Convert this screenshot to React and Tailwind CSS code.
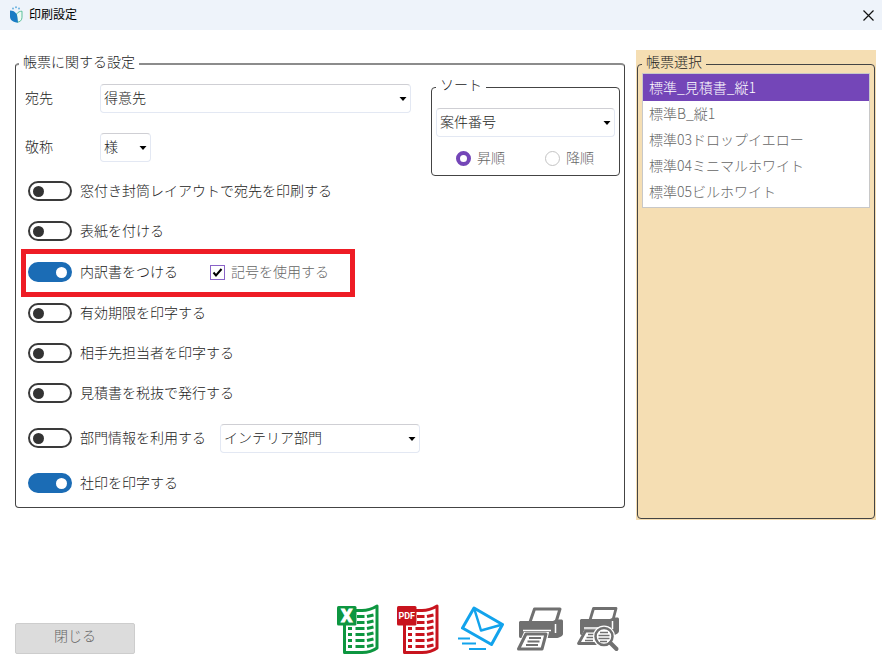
import React, { useState } from "react";

const FONT = "font-['Noto_Sans_CJK_JP',sans-serif]";

const reports = [
  "標準_見積書_縦1",
  "標準B_縦1",
  "標準03ドロップイエロー",
  "標準04ミニマルホワイト",
  "標準05ビルホワイト",
];

const Select = ({ id, label, options, className = "" }) => (
  <div className={`relative ${className}`}>
    <select
      id={id}
      aria-label={label}
      className="block h-[29px] w-full appearance-none rounded-sm border border-[#e3e8f3] border-t-[#cfcfd4] bg-white pb-[3px] pl-[3px] pr-5 text-[#222]"
    >
      {options.map((option) => (
        <option key={option}>{option}</option>
      ))}
    </select>
    <svg
      viewBox="0 0 8 4"
      className="pointer-events-none absolute right-1 top-[13px] h-1 w-2 fill-black"
    >
      <path d="M0.5 0h7L4 4z" />
    </svg>
  </div>
);

const Toggle = ({ label, on = false }) => {
  const [checked, setChecked] = useState(on);
  return (
    <label className="flex items-center gap-2">
      <input
        type="checkbox"
        role="switch"
        checked={checked}
        onChange={() => setChecked(!checked)}
        className={`flex h-5 w-11 shrink-0 appearance-none items-center rounded-full border-2 px-[3px] before:size-[11px] before:rounded-full ${
          checked
            ? "justify-end border-[#1b6cb5] bg-[#1b6cb5] before:bg-white"
            : "justify-start border-[#3a3a3a] bg-white before:bg-[#333]"
        }`}
      />
      <span className="pb-0.5">{label}</span>
    </label>
  );
};

const Legend = ({ children, className = "ml-[3px]" }) => (
  <legend className={`px-1 pb-[5px] leading-[13px] ${className}`}>
    {children}
  </legend>
);

const LogoIcon = () => (
  <svg viewBox="0 0 14 18" className="h-[18px] w-[14px]">
    <path
      d="M7.5 8c1.500-2 3.500-2.800 5.500-2.800v6c0 3-2 5-5 5z"
      fill="#eefaf4"
      stroke="#5cc09c"
    />
    <path
      d="M1 4.500c3 0 5 1 6.500 3.500 1 2 1 5 1.500 8.500-5 0-8-2.500-8-6z"
      fill="#1a7cc4"
    />
    <circle cx="4" cy="2.500" r="1" fill="#6db4e0" />
    <circle cx="7" cy="1.200" r="1" fill="#6db4e0" />
    <circle cx="10" cy="2.500" r="1" fill="#6db4e0" />
  </svg>
);

const SheetIcon = ({ color, text }) => (
  <svg viewBox="0 0 42 50" className="h-[50px] w-[42px]">
    <path
      d="M18 6.500h7c6 0 10-1.500 15-4.500v42c-4 3-9 4.500-15 4.500H7.500V20"
      fill="none"
      stroke={color}
      strokeWidth="3"
      strokeLinejoin="round"
    />
    <path
      d="M20 12.500h7.500M20 18.500h7.500M18.500 24.500h9M18.500 30.500h9M18.500 36.500h9M18.500 42.500h9M11 24.500h4M11 30.500h4M11 36.500h4M11 42.500h4M30 12.500l6.500-1.500M30 18.500l6.500-1.500M30 24.500l6.500-1.500M30 30.500l6.500-1.500M30 36.500l6.500-1.500M30 42.500l6.500-1.500"
      stroke={color}
      strokeWidth="3"
    />
    <rect y="2" width="19.500" height="19.500" rx="1.500" fill={color} />
    <text
      x="9.700"
      y={text === "X" ? 18 : 15}
      textAnchor="middle"
      fill="#fff"
      stroke="#fff"
      strokeWidth={text === "X" ? 1 : 0}
      fontFamily="Roboto, sans-serif"
      fontWeight="bold"
      fontSize={text === "X" ? 18 : 9}
    >
      {text}
    </text>
  </svg>
);

const MailIcon = () => (
  <svg
    viewBox="0 0 46 46"
    className="h-[46px] w-[46px]"
    fill="none"
    stroke="#12a3ec"
    strokeWidth="3"
    strokeLinejoin="round"
  >
    <path d="M16 2L44.500 18.500L33.500 38.500L4.500 22z" />
    <path d="M16 2L23 24.500L44.500 18.500" strokeWidth="2.500" />
    <path d="M0 32.500h12M4 37.500h14M11 43h17" strokeWidth="2.200" />
  </svg>
);

const PrinterIcon = () => (
  <svg viewBox="0 0 48 44" className="h-11 w-12">
    <path d="M14 15L18.500 2H44L40 15" fill="#fff" stroke="#707070" strokeWidth="3" strokeLinejoin="round" />
    <path d="M4 14h33l3-1.500h5c1.500 0 2 .5 2 2v12.500c0 2-4 4-7 4H5c-1.500 0-2-.5-2-2V15z" fill="#707070" />
    <path d="M7 23.500h28M39.500 17v9" stroke="#fff" strokeWidth="1.500" />
    <path d="M8 25H33L29 43.500H0z" fill="#fff" />
    <path d="M10 27H30L26 42H2.500z" fill="#fff" stroke="#707070" strokeWidth="3" strokeLinejoin="round" />
    <path d="M13 31h12M11.500 34.500h12M10 38h12" stroke="#707070" strokeWidth="1.800" />
  </svg>
);

const PreviewIcon = () => (
  <svg viewBox="0 0 46 46" className="h-[46px] w-[46px]">
    <path d="M14 14L17.500 2.500H40L37 14" fill="#fff" stroke="#707070" strokeWidth="2.800" strokeLinejoin="round" />
    <path d="M5 13h29l3-1.500h4c1.500 0 2 .5 2 2v11.500c0 2-3 4-6 4H6c-1.500 0-2-.5-2-2V14z" fill="#707070" />
    <path d="M8 22h26M36.500 15v8" stroke="#fff" strokeWidth="1.500" />
    <path d="M8.500 23.500H28L24 41H0z" fill="#fff" />
    <path d="M9.500 25H26L22 37.500H2.500z" fill="#fff" stroke="#707070" strokeWidth="2.800" strokeLinejoin="round" />
    <path d="M12 28.500h8M10.500 31.500h8M9 34.500h8" stroke="#707070" strokeWidth="1.500" />
    <circle cx="28" cy="30.500" r="11" fill="#fff" />
    <circle cx="28" cy="30.500" r="8.500" fill="#fff" stroke="#707070" strokeWidth="2.500" />
    <path d="M24 26.500h8M22.500 29.500h11M22.500 32.500h11M24 35.500h7" stroke="#707070" strokeWidth="1.500" />
    <path d="M34.500 37l6 6" stroke="#707070" strokeWidth="4" strokeLinecap="round" />
  </svg>
);

const App = () => {
  const [selected, setSelected] = useState(0);

  return (
    <div className={`flex min-h-screen flex-col bg-white text-[14px] font-light leading-5 text-[#222] ${FONT}`}>
      <header className="flex h-[30px] items-center bg-[#eef3fa] pl-[9px] pr-1.5 text-black">
        <LogoIcon />
        <h1 className="ml-1.5 flex-1 pb-0.5 text-[12px] font-normal">印刷設定</h1>
        <button type="button" aria-label="閉じる" className="p-0.5">
          <svg viewBox="0 0 11 11" className="size-[11px]" stroke="#111" strokeWidth="1.200">
            <path d="M0.500 0.500l10 10M10.500 0.500l-10 10" />
          </svg>
        </button>
      </header>

      <main className="flex items-start gap-[11px] pl-[15px] pr-1.5 pt-5">
        <fieldset className="mt-[5px] flex-1 rounded border border-t-2 border-[#444] border-t-[#8c8c8c] pb-1">
          <Legend>帳票に関する設定</Legend>
          <div className="flex items-start">
            <div className="flex-1 pt-[11px]">
              <div className="flex items-center pl-[9px]">
                <label htmlFor="dest" className="w-[75px] pb-[3px]">宛先</label>
                <Select id="dest" options={["得意先"]} className="mr-5 flex-1" />
              </div>
              <div className="mt-5 flex items-center pl-[9px]">
                <label htmlFor="honorific" className="w-[75px] pb-[3px]">敬称</label>
                <Select id="honorific" options={["様"]} className="w-[51px]" />
              </div>
              <div className="mt-[9px] pl-3">
                <div className="flex h-10 items-center">
                  <Toggle label="窓付き封筒レイアウトで宛先を印刷する" />
                </div>
                <div className="flex h-10 items-center">
                  <Toggle label="表紙を付ける" />
                </div>
                <div className="relative flex h-[42px] items-center gap-8">
                  <Toggle label="内訳書をつける" on />
                  <label className="flex items-center gap-1.5 text-[#666]">
                    <input
                      type="checkbox"
                      defaultChecked
                      className="peer size-[15px] appearance-none border border-[#8a63c8] bg-white"
                    />
                    <svg
                      viewBox="0 0 15 15"
                      className="pointer-events-none invisible absolute size-[15px] peer-checked:visible"
                      fill="none"
                      stroke="#000"
                      strokeWidth="2"
                    >
                      <path d="M3.500 7.500l2.500 3L11.500 4" />
                    </svg>
                    <span className="pb-0.5">記号を使用する</span>
                  </label>
                  <div className="pointer-events-none absolute -left-[7px] -top-0.5 h-12 w-[334px] border-[5px] border-[#ee1c25]" />
                </div>
                <div className="flex h-10 items-center">
                  <Toggle label="有効期限を印字する" />
                </div>
                <div className="flex h-10 items-center">
                  <Toggle label="相手先担当者を印字する" />
                </div>
                <div className="flex h-10 items-center">
                  <Toggle label="見積書を税抜で発行する" />
                </div>
                <div className="flex h-[50px] items-center gap-3.5">
                  <Toggle label="部門情報を利用する" />
                  <Select label="部門" options={["インテリア部門"]} className="w-[200px]" />
                </div>
                <div className="flex h-10 items-center">
                  <Toggle label="社印を印字する" on />
                </div>
              </div>
            </div>

            <fieldset className="mr-1 mt-[5px] w-[189px] rounded border border-[#444] px-1 pb-1.5">
              <Legend className="">ソート</Legend>
              <Select label="並び順の項目" options={["案件番号"]} className="mt-3" />
              <div className="mt-[10px] flex gap-10 pl-5 text-[#666]">
                <label className="flex items-center gap-1.5">
                  <input
                    type="radio"
                    name="order"
                    defaultChecked
                    className="size-[15px] appearance-none rounded-full border border-[#c4c4c4] bg-white checked:border-4 checked:border-[#7446b8]"
                  />
                  <span className="pb-0.5">昇順</span>
                </label>
                <label className="flex items-center gap-1.5">
                  <input
                    type="radio"
                    name="order"
                    className="size-[15px] appearance-none rounded-full border border-[#c4c4c4] bg-white checked:border-4 checked:border-[#7446b8]"
                  />
                  <span className="pb-0.5">降順</span>
                </label>
              </div>
            </fieldset>
          </div>
        </fieldset>

        <section className="w-60 bg-[#f5deb3] px-px pb-px pt-[5px]">
          <fieldset className="min-h-[464px] rounded border border-[#444] px-1">
            <Legend className="">帳票選択</Legend>
            <ul className="border border-[#c8c8c8] bg-white pb-0.5 text-[#666]">
              {reports.map((report, index) => (
                <li key={report}>
                  <button
                    type="button"
                    onClick={() => setSelected(index)}
                    className={`block w-full px-1.5 pb-0.5 text-left ${
                      selected === index
                        ? "h-[27px] bg-[#7446b8] text-white"
                        : "h-[26px]"
                    }`}
                  >
                    {report}
                  </button>
                </li>
              ))}
            </ul>
          </fieldset>
        </section>
      </main>

      <footer className="mt-auto flex items-end pb-[3px] pl-[15px] pr-[58px] pt-10">
        <button
          type="button"
          className="h-[31px] w-[120px] rounded-xs border border-[#cdcdcd] bg-[#dcdcdc] pb-2 text-[#666]"
        >
          閉じる
        </button>
        <div className="flex flex-1 items-center justify-center">
          <button type="button" aria-label="Excel出力">
            <SheetIcon color="#0d9640" text="X" />
          </button>
          <button type="button" aria-label="PDF出力" className="ml-[18px]">
            <SheetIcon color="#c8141e" text="PDF" />
          </button>
          <button type="button" aria-label="メール送信" className="ml-[19px]">
            <MailIcon />
          </button>
          <button type="button" aria-label="印刷" className="ml-3">
            <PrinterIcon />
          </button>
          <button type="button" aria-label="印刷プレビュー" className="ml-3">
            <PreviewIcon />
          </button>
        </div>
      </footer>
    </div>
  );
};

export default App;
